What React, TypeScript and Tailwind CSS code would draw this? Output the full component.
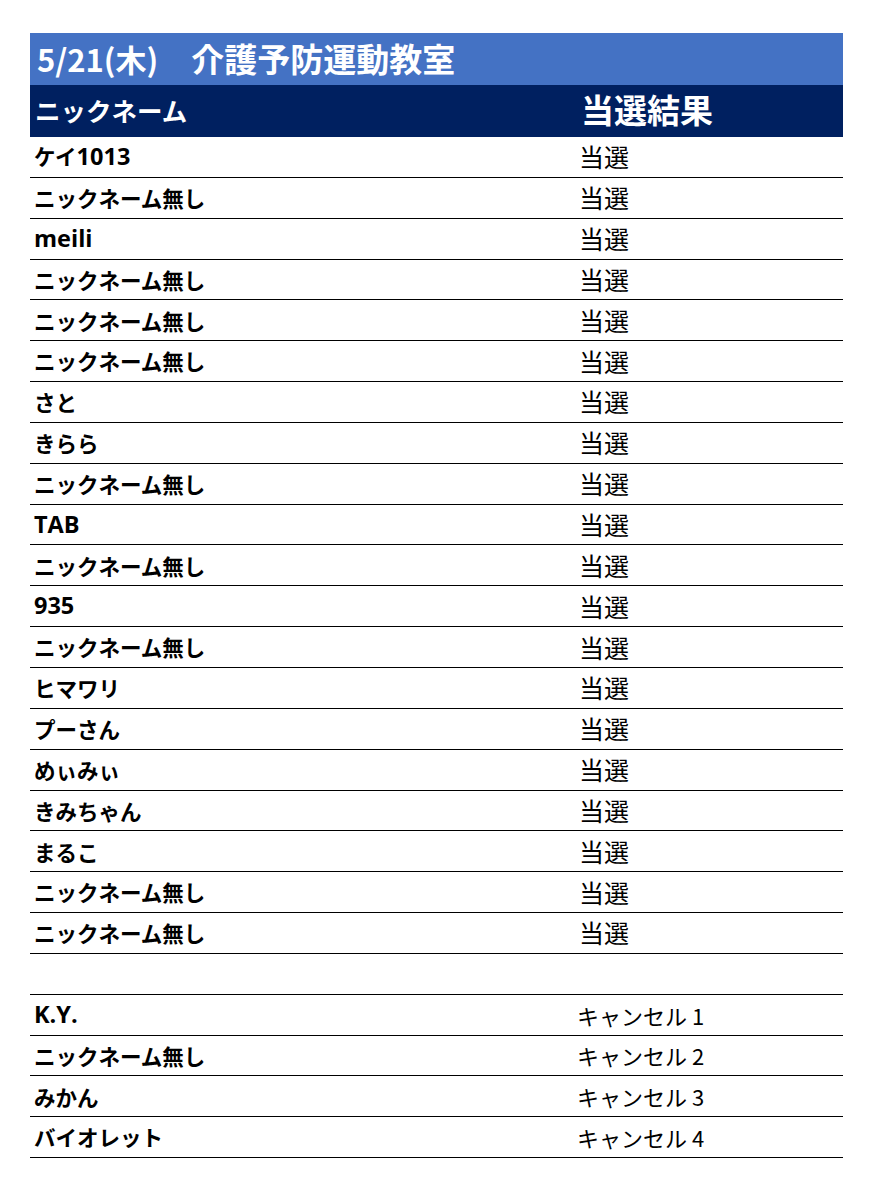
import React from "react";

const winners = [
  "ケイ1013",
  "ニックネーム無し",
  "meili",
  "ニックネーム無し",
  "ニックネーム無し",
  "ニックネーム無し",
  "さと",
  "きらら",
  "ニックネーム無し",
  "TAB",
  "ニックネーム無し",
  "935",
  "ニックネーム無し",
  "ヒマワリ",
  "プーさん",
  "めぃみぃ",
  "きみちゃん",
  "まるこ",
  "ニックネーム無し",
  "ニックネーム無し",
];

const cancels = [
  ["K.Y.", "キャンセル 1"],
  ["ニックネーム無し", "キャンセル 2"],
  ["みかん", "キャンセル 3"],
  ["バイオレット", "キャンセル 4"],
];

function Name({ text }: { text: string }) {
  const parts = text.split(/([A-Za-z0-9.]+)/).filter((p) => p.length > 0);
  return (
    <>
      {parts.map((p, i) =>
        /^[A-Za-z0-9.]+$/.test(p) ? (
          <span
            key={i}
            className="text-[23.5px] font-bold"
            style={{ fontFamily: '"Open Sans", "Noto Sans", sans-serif' }}
          >
            {p}
          </span>
        ) : (
          <span key={i}>{p}</span>
        )
      )}
    </>
  );
}

function Row({ name, result, cancel }: { name: string; result: string; cancel?: boolean }) {
  return (
    <div className="flex h-[40.85px] items-center border-b border-black">
      <div className="w-[545px] pl-[4px] text-[21.5px] font-bold leading-none text-black">
        <Name text={name} />
      </div>
      <div
        className={
          cancel
            ? "pl-[2px] text-[22px] leading-none text-black"
            : "pl-[4px] text-[25px] leading-none text-black"
        }
      >
        {result}
      </div>
    </div>
  );
}

export default function App() {
  return (
    <div
      className="min-h-[1181px] w-[872px] bg-white pt-[33px] pl-[30px]"
      style={{ fontFamily: '"Noto Sans CJK JP", "Noto Sans", sans-serif' }}
    >
      <div className="w-[813px]">
        <div className="flex h-[52px] items-center bg-[#4472C4] pb-[2px] pl-[7px] font-bold leading-none text-white">
          <span className="text-[31px]">5/21(木)</span>
          <span className="ml-[33px] text-[33px]">介護予防運動教室</span>
        </div>
        <div className="flex h-[52px] items-center bg-[#002060] pb-[3px] text-white">
          <div className="w-[545px] pl-[5px] text-[25.5px] font-bold leading-none">ニックネーム</div>
          <div className="pl-[6px] text-[33px] font-bold leading-none">当選結果</div>
        </div>
        {winners.map((n, i) => (
          <Row key={i} name={n} result="当選" />
        ))}
        <div className="h-[40.85px] border-b border-black" />
        {cancels.map(([n, r], i) => (
          <Row key={"c" + i} name={n} result={r} cancel />
        ))}
      </div>
    </div>
  );
}
